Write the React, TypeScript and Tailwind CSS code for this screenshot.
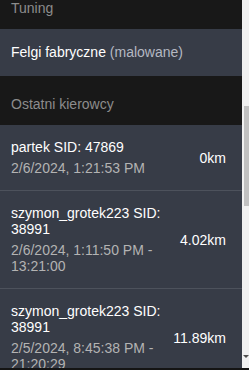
import React from 'react';

const drivers = [
  { name: 'partek SID: 47869', date: '2/6/2024, 1:21:53 PM', km: '0km' },
  { name: 'szymon_grotek223 SID: 38991', date: '2/6/2024, 1:11:50 PM - 13:21:00', km: '4.02km' },
  { name: 'szymon_grotek223 SID: 38991', date: '2/5/2024, 8:45:38 PM - 21:20:29', km: '11.89km' },
];

const SectionHeader: React.FC<{ title: string }> = ({ title }) => (
  <div className="bg-[#181818] pl-[11px] pt-[20px] pb-[13px] text-[14px] leading-[16px] text-[#8c8c8c]">
    {title}
  </div>
);

export default function App() {
  return (
    <div className="w-[249px] h-[370px] flex flex-col bg-[#141414] overflow-hidden font-['Liberation_Sans',Arial,sans-serif]">
      <div className="flex h-[368px]">
        <div className="w-[242px] overflow-hidden">
          <div className="-mt-[20px]">
            {/* Tuning */}
            <SectionHeader title="Tuning" />
            <div className="bg-[#373c47] pl-[11px] pt-[15px] pb-[16px] text-[14px] leading-[16px] text-white">
              Felgi fabryczne <span className="text-[#b4b8c2]">(malowane)</span>
            </div>

            {/* Ostatni kierowcy */}
            <SectionHeader title="Ostatni kierowcy" />
            {drivers.map((d, i) => (
              <div
                key={i}
                className="flex items-center gap-3 bg-[#373c47] border-b border-[#4d525c] pl-[11px] pr-[16px] py-[14px]"
              >
                <div className="flex-1 min-w-0">
                  <div className="text-[14px] leading-[16px] text-white">{d.name}</div>
                  <div className="mt-[5px] text-[14px] leading-[16px] text-[#b3b3b3]">{d.date}</div>
                </div>
                <div className="text-[14px] leading-[16px] text-white">{d.km}</div>
              </div>
            ))}
          </div>
        </div>

        {/* scrollbar */}
        <div className="w-[7px] bg-[#f1f1f1] flex flex-col items-end">
          <div className="mt-[106px] w-[5px] h-[100px] bg-[#c1c1c1]" />
          <div className="mt-auto mb-[10px] w-0 h-0 border-l-[3px] border-r-[3px] border-t-[3px] border-l-transparent border-r-transparent border-t-[#505050]" />
        </div>
      </div>
      <div className="h-[2px] bg-[#141414]" />
    </div>
  );
}
